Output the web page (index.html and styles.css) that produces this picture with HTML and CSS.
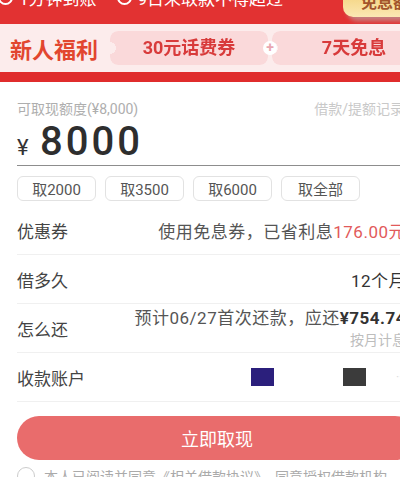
FILE: index.html
```html
<!DOCTYPE html>
<html lang="zh-CN">
<head>
    <meta charset="UTF-8">
    <meta name="viewport" content="width=device-width, initial-scale=1.0">
    <title>立即取现</title>
    <link rel="stylesheet" href="styles.css">
</head>
<body>
    <div class="topbar">
        <div class="tips">
            <span class="dot"></span><span>1分钟到账</span>
            <span class="dot second"></span><span>9日未取款不得超过</span>
        </div>
        <div class="badge">免息额</div>
    </div>

    <div class="welfare">
        <div class="welfare-title">新人福利</div>
        <div class="ticket first">30元话费券</div>
        <div class="plus">+</div>
        <div class="ticket second">7天免息</div>
    </div>
    <div class="redbar"></div>

    <div class="main">
        <div class="limit-row">
            <span class="limit">可取现额度(¥8,000)</span>
            <span class="record">借款/提额记录</span>
        </div>
        <div class="amount">
            <span class="yen">¥</span>
            <span class="num">8000</span>
        </div>
        <div class="quick">
            <button class="pick">取2000</button>
            <button class="pick">取3500</button>
            <button class="pick">取6000</button>
            <button class="pick">取全部</button>
        </div>

        <div class="row">
            <span class="label">优惠券</span>
            <span class="value">使用免息券，已省利息<em class="red">176.00元</em></span>
        </div>
        <div class="row">
            <span class="label">借多久</span>
            <span class="value dark">12个月</span>
        </div>
        <div class="row">
            <span class="label">怎么还</span>
            <div class="value-col">
                <span class="value">预计06/27首次还款，应还<b>¥754.74</b></span>
                <span class="sub">按月计息</span>
            </div>
        </div>
        <div class="row">
            <span class="label">收款账户</span>
            <div class="accounts">
                <span class="bank blue"></span>
                <span class="bank gray"></span>
                <span class="more">··</span>
            </div>
        </div>

        <button class="submit">立即取现</button>

        <div class="agree">
            <span class="check"></span>
            <span>本人已阅读并同意《相关借款协议》，同意授权借款机构</span>
        </div>
    </div>
</body>
</html>
```

FILE: styles.css
```css
body {
    margin: 0;
    width: 400px;
    overflow: hidden;
    background: #fff;
    font-family: 'Roboto', 'Noto Sans CJK SC', sans-serif;
    color: #333;
}

.topbar {
    height: 24px;
    background: #e23232;
    display: flex;
    justify-content: space-between;
    overflow: hidden;
}

.tips {
    margin-top: -15px;
    height: 24px;
    display: flex;
    align-items: center;
    gap: 6px;
    color: #fff;
    font-size: 17px;
    white-space: nowrap;
}

.tips .dot {
    width: 11px;
    height: 11px;
    border-radius: 50%;
    border: 2px solid #fff;
    margin-left: -2px;
}

.tips .dot.second {
    margin-left: 14px;
}

.badge {
    box-sizing: border-box;
    width: 57px;
    height: 17px;
    line-height: 6px;
    border-radius: 0 0 0 10px;
    background: linear-gradient(180deg, #f6d98d, #fbe8b4);
    color: #a3552c;
    font-weight: bold;
    font-size: 16px;
    padding-left: 18px;
    overflow: hidden;
    white-space: nowrap;
    box-shadow: 4px 4px 4px rgba(180, 180, 180, 0.6);
}

.welfare {
    height: 48px;
    background: #fcecec;
    display: flex;
    align-items: center;
    padding-left: 10px;
    white-space: nowrap;
    overflow: hidden;
}

.welfare-title {
    flex: none;
    width: 100px;
    color: #e2462f;
    font-size: 22px;
    font-weight: bold;
}

.ticket {
    flex: none;
    height: 34px;
    line-height: 34px;
    background: #fad9da;
    color: #d83b3b;
    font-weight: bold;
    font-size: 18px;
    text-align: center;
    border-radius: 8px;
    -webkit-mask: radial-gradient(circle 6px at 0 50%, transparent 98%, #000 100%);
}

.ticket.first {
    width: 158px;
}

.ticket.second {
    width: 164px;
}

.plus {
    flex: none;
    width: 14px;
    height: 14px;
    line-height: 13px;
    margin: 0 -5px;
    border-radius: 50%;
    background: #fff;
    color: #e9a6b1;
    font-size: 14px;
    font-weight: bold;
    text-align: center;
    position: relative;
    z-index: 1;
}

.redbar {
    height: 10px;
    background: #e02c2c;
}

.main {
    width: 400px;
    padding-left: 17px;
}

.limit-row {
    display: flex;
    justify-content: space-between;
    padding-top: 16px;
    font-size: 14px;
    white-space: nowrap;
}

.limit {
    color: #aeaeae;
}

.record {
    color: #c9c9c9;
    margin-right: 13px;
}

.amount {
    display: flex;
    align-items: baseline;
    height: 47px;
    border-bottom: 1px solid #8d8d8d;
    margin-right: -1px;
}

.yen {
    font-size: 22px;
    width: 23px;
    color: #333;
}

.num {
    font-size: 40px;
    font-weight: 500;
    letter-spacing: 3px;
    color: #2e2e2e;
}

.quick {
    display: flex;
    gap: 9px;
    padding-top: 10px;
    margin-bottom: 5px;
}

.pick {
    width: 79px;
    height: 25px;
    border: 1px solid #e2e2e2;
    border-radius: 6px;
    background: #fff;
    color: #555;
    font-family: 'Roboto', 'Noto Sans CJK SC', sans-serif;
    font-size: 15px;
    padding: 0;
}

.row {
    display: flex;
    justify-content: space-between;
    align-items: center;
    height: 48px;
    border-bottom: 1px solid #f0f0f0;
    padding-right: 11px;
    white-space: nowrap;
}

.label {
    font-size: 17px;
    color: #444;
}

.value {
    font-size: 17px;
    color: #555;
    letter-spacing: 0.5px;
}

.value.dark {
    color: #333;
}

.value em {
    font-style: normal;
}

.red {
    color: #e25a5a;
}

.value b {
    color: #333;
}

.value-col {
    display: flex;
    flex-direction: column;
    align-items: flex-end;
    margin-top: -4px;
}

.sub {
    font-size: 14px;
    color: #bdbdbd;
}

.accounts {
    display: flex;
    align-items: center;
}

.bank {
    width: 23px;
    height: 18px;
    margin-right: 69px;
}

.bank.blue {
    background: #2b1f7c;
}

.bank.gray {
    background: #3b3b3b;
    margin-right: 30px;
}

.more {
    color: #ddd;
    font-size: 12px;
    width: 10px;
}

.submit {
    display: block;
    width: 400px;
    height: 44px;
    margin-top: 14px;
    border: none;
    border-radius: 22px;
    background: #e96c6c;
    color: #fff;
    font-family: 'Roboto', 'Noto Sans CJK SC', sans-serif;
    font-size: 18px;
}

.agree {
    display: flex;
    align-items: center;
    gap: 9px;
    margin-top: 6px;
    font-size: 14px;
    color: #aaa;
    white-space: nowrap;
}

.check {
    width: 16px;
    height: 16px;
    border: 1.5px solid #ccc;
    border-radius: 50%;
    flex: none;
}
```
